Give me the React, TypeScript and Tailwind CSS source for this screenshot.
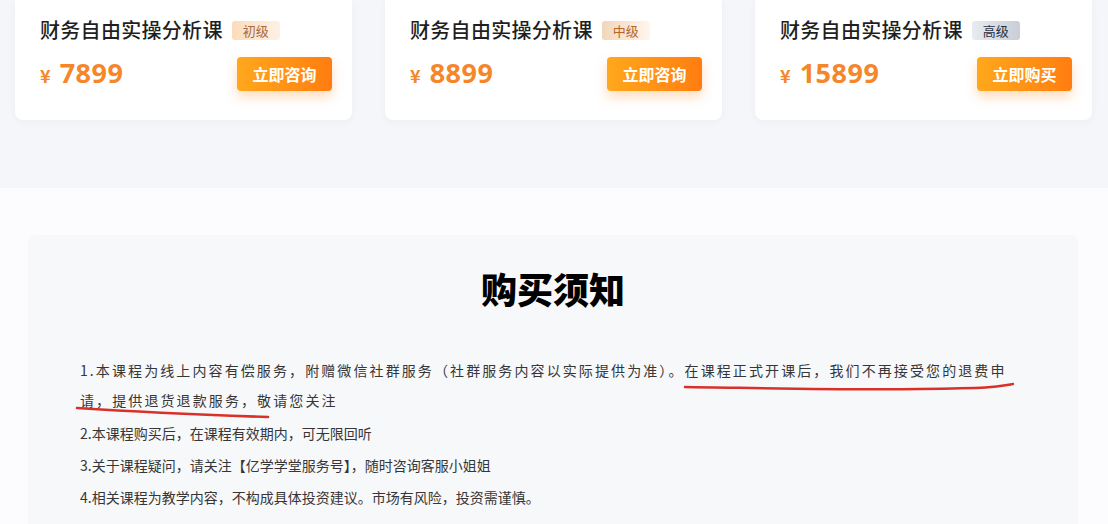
import React from "react";

const cards = [
  {
    level: "初级",
    badge: "bg-gradient-to-r from-[#fbdcbc] to-[#fdf1e4] text-[#a76a3d]",
    price: "7899",
    action: "立即咨询",
  },
  {
    level: "中级",
    badge: "bg-gradient-to-r from-[#f1d6bb] to-[#fff6ec] text-[#b8652a]",
    price: "8899",
    action: "立即咨询",
  },
  {
    level: "高级",
    badge: "bg-gradient-to-r from-[#e8ebf0] to-[#c9ced7] text-[#2b3040]",
    price: "15899",
    action: "立即购买",
  },
];

const cjk = "font-['Noto_Sans_CJK_SC','Noto_Sans',sans-serif]";

function CourseCard({ level, badge, price, action }: (typeof cards)[number]) {
  return (
    <div className="w-[337px] h-[120px] bg-white rounded-b-lg shadow-[0_2px_8px_rgba(30,40,80,0.04)] pl-[25px] pr-[20px] pt-[19px]">
      <div className="flex items-center h-[22px] gap-[9px]">
        <span className="text-[20px] leading-[22px] font-medium text-[#1f1f1f] tracking-[0.3px]">财务自由实操分析课</span>
        <span className={`w-[48px] h-[19px] rounded-[3px] text-[13px] leading-[19px] flex items-center justify-center ${badge}`}>
          {level}
        </span>
      </div>
      <div className="mt-[16px] flex items-center justify-between h-[34px]">
        <div className="flex items-baseline text-[#f5862a]">
          <span className="text-[18px] font-bold mr-[9px]">¥</span>
          <span className="text-[27px] font-bold font-['Noto_Sans',sans-serif] tracking-[0.5px] leading-none">{price}</span>
        </div>
        <button className="w-[95px] h-[34px] rounded-[4px] bg-gradient-to-r from-[#ffa81c] to-[#ff7d10] text-white text-[16px] font-bold shadow-[0_6px_12px_rgba(255,130,20,0.28)]">
          {action}
        </button>
      </div>
    </div>
  );
}

export default function App() {
  return (
    <div className={`w-full h-[524px] overflow-hidden bg-[#fcfcfe] ${cjk}`}>
      <section className="h-[188px] bg-[#f5f6f9] px-[15px] flex gap-[33px]">
        {cards.map((c) => (
          <CourseCard key={c.level} {...c} />
        ))}
      </section>

      <section className="pt-[47px] pl-[28px] pr-[30px]">
        <div className="h-[300px] bg-[#f7f8fa] rounded-md pt-[33px] pl-[52px]">
          <h2 className="text-center text-[36px] leading-[40px] font-black text-black pr-[52px]">购买须知</h2>
          <div className="mt-[47px] text-[14px] text-[#363636]">
            <p className="relative leading-[30px] tracking-[2.1px] mb-[2px]">
              1.本课程为线上内容有偿服务，附赠微信社群服务（社群服务内容以实际提供为准）。在课程正式开课后，我们不再接受您的退费申
              <br />
              请，提供退货退款服务，敬请您关注
              <svg className="absolute left-0 top-0 w-full h-full overflow-visible pointer-events-none">
                <path
                  d="M605 32 C 680 33, 760 35, 840 34 S 915 32, 933 29"
                  fill="none"
                  stroke="#d9302a"
                  strokeWidth="2.4"
                  strokeLinecap="round"
                />
                <path
                  d="M-3 53 C 60 57, 130 60, 188 62"
                  fill="none"
                  stroke="#d9302a"
                  strokeWidth="2.6"
                  strokeLinecap="round"
                />
              </svg>
            </p>
            <p className="leading-[32px]">2.本课程购买后，在课程有效期内，可无限回听</p>
            <p className="leading-[32px]">3.关于课程疑问，请关注【亿学学堂服务号】，随时咨询客服小姐姐</p>
            <p className="leading-[32px]">4.相关课程为教学内容，不构成具体投资建议。市场有风险，投资需谨慎。</p>
          </div>
        </div>
      </section>
    </div>
  );
}
